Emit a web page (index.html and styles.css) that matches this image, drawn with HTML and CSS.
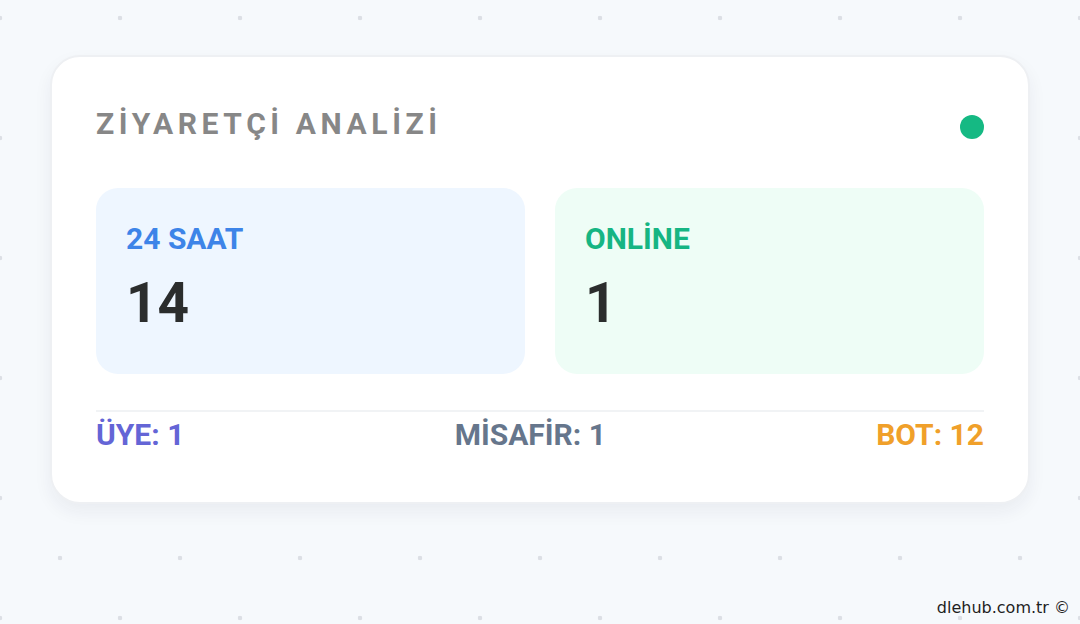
FILE: index.html
```html
<!DOCTYPE html>
<html lang="tr">
<head>
<meta charset="utf-8">
<link rel="stylesheet" href="styles.css">
</head>
<body>
<main class="page">
  <section class="card">
    <header class="card-head">
      <h1 class="title">ZİYARETÇİ ANALİZİ</h1>
      <span class="live-dot"></span>
    </header>
    <div class="stats">
      <div class="stat stat-day">
        <div class="stat-label">24 SAAT</div>
        <div class="stat-value">14</div>
      </div>
      <div class="stat stat-online">
        <div class="stat-label">ONLİNE</div>
        <div class="stat-value">1</div>
      </div>
    </div>
    <footer class="breakdown">
      <span class="item item-member">ÜYE: 1</span>
      <span class="item item-guest">MİSAFİR: 1</span>
      <span class="item item-bot">BOT: 12</span>
    </footer>
  </section>
</main>
<div class="credit">dlehub.com.tr ©</div>
</body>
</html>
```

FILE: styles.css
```css
html, body {
  margin: 0;
  padding: 0;
}

body {
  width: 1080px;
  height: 624px;
  overflow: hidden;
  position: relative;
  background-color: #f6f9fc;
  background-image:
    radial-gradient(circle, #dcdfe5 2px, rgba(220, 223, 229, 0) 2.6px),
    radial-gradient(circle, #dcdfe5 2px, rgba(220, 223, 229, 0) 2.6px);
  background-size: 120px 120px, 120px 120px;
  background-position: 60px 78px, 0px 18px;
  font-family: Roboto, "Liberation Sans", sans-serif;
}

.page {
  padding: 55px 50px 0;
}

.card {
  box-sizing: border-box;
  width: 980px;
  height: 449px;
  background: #ffffff;
  border: 2px solid #eef0f3;
  border-radius: 30px;
  box-shadow: 0 8px 18px rgba(30, 40, 60, 0.06);
  padding: 49px 44px 0;
}

.card-head {
  display: flex;
  align-items: center;
  justify-content: space-between;
  height: 36px;
}

.title {
  margin: 0;
  font-size: 30px;
  line-height: 36px;
  font-weight: 700;
  letter-spacing: 4.6px;
  color: #878787;
}

.live-dot {
  width: 24px;
  height: 24px;
  border-radius: 50%;
  background: #15b983;
  margin-top: 6px;
}

.stats {
  display: grid;
  grid-template-columns: 1fr 1fr;
  gap: 30px;
  margin-top: 46px;
}

.stat {
  height: 186px;
  box-sizing: border-box;
  border-radius: 22px;
  padding: 34px 30px 0;
}

.stat-day {
  background: #eef6ff;
}

.stat-online {
  background: #eefdf6;
}

.stat-label {
  font-size: 30px;
  line-height: 34px;
  font-weight: 700;
}

.stat-day .stat-label {
  color: #3d84e8;
}

.stat-online .stat-label {
  color: #16b583;
}

.stat-value {
  margin-top: 15px;
  font-size: 55px;
  line-height: 64px;
  font-weight: 700;
  color: #2b2d2d;
}

.breakdown {
  display: flex;
  justify-content: space-between;
  margin-top: 36px;
  border-top: 2px solid #f1f3f5;
  padding-top: 7px;
}

.item {
  font-size: 30px;
  line-height: 32px;
  font-weight: 700;
}

.item-member {
  color: #6465d6;
}

.item-guest {
  color: #66768c;
}

.item-bot {
  color: #f0a02a;
}

.credit {
  position: absolute;
  right: 10px;
  bottom: 7px;
  font-family: "DejaVu Sans", sans-serif;
  font-size: 16px;
  color: #1f1f1f;
}
```
